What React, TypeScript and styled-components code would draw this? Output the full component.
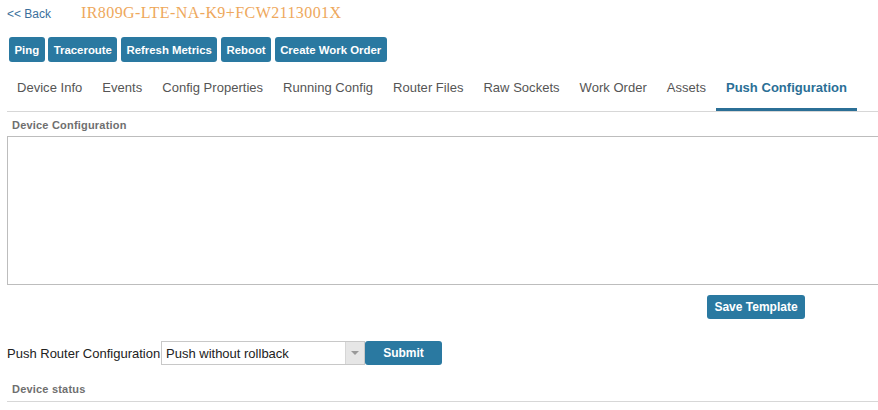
import React from "react";
import styled, { createGlobalStyle } from "styled-components";

const Global = createGlobalStyle`
  html, body { margin: 0; padding: 0; background: #fff; overflow: hidden; }
  body { font-family: "Liberation Sans", Arial, sans-serif; }
  * { box-sizing: border-box; }
`;

const Page = styled.div`
  width: 878px;
  height: 410px;
  padding: 0 0 0 7px;
  overflow: hidden;
`;

const Header = styled.div`
  display: flex;
  align-items: baseline;
  height: 28px;
  padding-top: 4px;
`;

const BackLink = styled.a`
  font-size: 12px;
  color: #3a6f9c;
  text-decoration: none;
  width: 74px;
`;

const Title = styled.span`
  font-family: "Liberation Serif", "Times New Roman", serif;
  font-size: 16px;
  letter-spacing: 0.42px;
  color: #eea85c;
`;

const Actions = styled.div`
  display: flex;
  gap: 3.5px;
  padding: 9px 0 0 2px;
`;

const ActionButton = styled.button`
  height: 25px;
  padding: 0 5.5px;
  border: none;
  border-radius: 3px;
  background: #2a79a1;
  color: #fff;
  font-family: "Liberation Sans", Arial, sans-serif;
  font-weight: bold;
  font-size: 11.4px;
`;

const Tabs = styled.div`
  display: flex;
  margin-top: 8px;
  height: 42px;
  border-bottom: 1px solid #d7d7d7;
`;

const Tab = styled.div<{ $active?: boolean }>`
  display: flex;
  align-items: center;
  padding: 0 10px ${(p) => (p.$active ? "4px" : "7px")};
  height: 100%;
  font-size: 13px;
  color: ${(p) => (p.$active ? "#2b6f96" : "#555")};
  font-weight: ${(p) => (p.$active ? "bold" : "normal")};
  border-bottom: ${(p) => (p.$active ? "3px solid #2b6f96" : "none")};
  margin-bottom: -1px;
  letter-spacing: 0.025px;
`;

const SectionTitle = styled.div`
  font-size: 11px;
  font-weight: bold;
  color: #6f6f6f;
  padding-left: 5px;
  letter-spacing: 0.2px;
`;

const ConfigSection = styled.div`
  padding-top: 7px;
`;

const ConfigArea = styled.textarea`
  display: block;
  margin-top: 5px;
  width: 880px;
  height: 149px;
  border: 1px solid #bdbdbd;
  resize: none;
  outline: none;
`;

const SaveRow = styled.div`
  display: flex;
  justify-content: flex-end;
  padding: 10px 73px 0 0;
`;

const PrimaryButton = styled.button<{ $w: number }>`
  width: ${(p) => p.$w}px;
  height: 24px;
  border: none;
  border-radius: 3px;
  background: #2a79a1;
  color: #fff;
  font-family: "Liberation Sans", Arial, sans-serif;
  font-weight: bold;
  font-size: 12px;
  padding: 0;
`;

const PushRow = styled.div`
  display: flex;
  align-items: center;
  margin-top: 22px;
  height: 24px;
`;

const Label = styled.span`
  font-size: 13px;
  color: #222;
  width: 154px;
`;

const Select = styled.div`
  display: flex;
  width: 204px;
  height: 24px;
  border: 1px solid #c8c8c8;
  background: #fff;
`;

const SelectValue = styled.div`
  flex: 1;
  display: flex;
  align-items: center;
  padding-left: 4px;
  font-size: 13px;
  color: #222;
`;

const SelectArrow = styled.div`
  width: 19px;
  display: flex;
  align-items: center;
  justify-content: center;
  background: #e6e6e6;
  border-left: 1px solid #d6d6d6;
`;

const StatusSection = styled.div`
  margin-top: 18px;
  padding-bottom: 6px;
  border-bottom: 1px solid #d7d7d7;
`;

const tabs = [
  "Device Info",
  "Events",
  "Config Properties",
  "Running Config",
  "Router Files",
  "Raw Sockets",
  "Work Order",
  "Assets",
  "Push Configuration",
];

export default function App() {
  return (
    <>
      <Global />
      <Page>
        <Header>
          <BackLink href="#">&lt;&lt; Back</BackLink>
          <Title>IR809G-LTE-NA-K9+FCW2113001X</Title>
        </Header>
        <Actions>
          {["Ping", "Traceroute", "Refresh Metrics", "Reboot", "Create Work Order"].map((b) => (
            <ActionButton key={b}>{b}</ActionButton>
          ))}
        </Actions>
        <Tabs>
          {tabs.map((t) => (
            <Tab key={t} $active={t === "Push Configuration"}>
              {t}
            </Tab>
          ))}
        </Tabs>
        <ConfigSection>
          <SectionTitle>Device Configuration</SectionTitle>
          <ConfigArea />
        </ConfigSection>
        <SaveRow>
          <PrimaryButton $w={98}>Save Template</PrimaryButton>
        </SaveRow>
        <PushRow>
          <Label>Push Router Configuration</Label>
          <Select>
            <SelectValue>Push without rollback</SelectValue>
            <SelectArrow>
              <svg width="8" height="4" viewBox="0 0 8 4">
                <path d="M0 0 L8 0 L4 4 Z" fill="#999" />
              </svg>
            </SelectArrow>
          </Select>
          <PrimaryButton $w={77}>Submit</PrimaryButton>
        </PushRow>
        <StatusSection>
          <SectionTitle>Device status</SectionTitle>
        </StatusSection>
      </Page>
    </>
  );
}
